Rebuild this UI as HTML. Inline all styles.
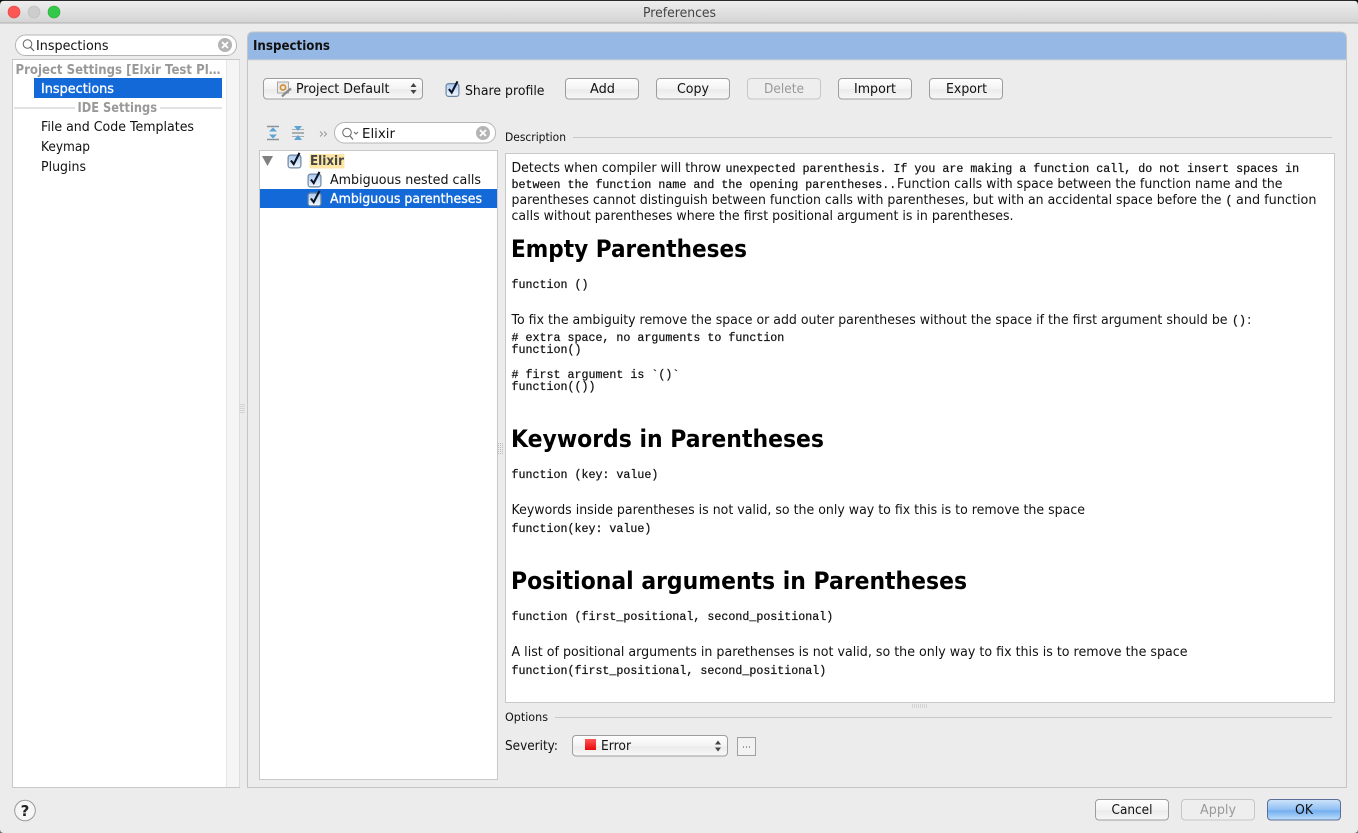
<!DOCTYPE html>
<html>
<head>
<meta charset="utf-8">
<title>Preferences</title>
<style>
html,body{margin:0;padding:0;width:1358px;height:833px;overflow:hidden;background:#ececec}
svg{display:block}
text{font-family:"DejaVu Sans","Liberation Sans",sans-serif;font-size:13px;fill:#111;white-space:pre}
.m{font-family:"Liberation Mono",monospace;font-size:11.67px;stroke:#111;stroke-width:.22}
.h{font-weight:bold;font-size:24px;fill:#000}
.b{font-weight:bold}
.g{fill:#999}
.c{text-anchor:middle}
.w{fill:#fff;stroke:#fff;stroke-width:.3}
</style>
</head>
<body>
<svg width="1358" height="833" viewBox="0 0 1358 833" xmlns="http://www.w3.org/2000/svg">
<defs>
<linearGradient id="tb" x1="0" y1="0" x2="0" y2="1"><stop offset="0" stop-color="#efefef"/><stop offset="1" stop-color="#d3d3d3"/></linearGradient>
<linearGradient id="btn" x1="0" y1="0" x2="0" y2="1"><stop offset="0" stop-color="#ffffff"/><stop offset=".5" stop-color="#f3f3f3"/><stop offset=".55" stop-color="#ebebeb"/><stop offset="1" stop-color="#f8f8f8"/></linearGradient>
<linearGradient id="ok" x1="0" y1="0" x2="0" y2="1"><stop offset="0" stop-color="#cfe3fa"/><stop offset=".5" stop-color="#8fc0f4"/><stop offset=".55" stop-color="#74aef0"/><stop offset="1" stop-color="#bfe0fb"/></linearGradient>
<linearGradient id="cb" x1="0" y1="0" x2="0" y2="1"><stop offset="0" stop-color="#a9c9ee"/><stop offset=".5" stop-color="#cfe2f7"/><stop offset="1" stop-color="#f4f9ff"/></linearGradient>
<linearGradient id="red" x1="0" y1="0" x2="0" y2="1"><stop offset="0" stop-color="#f55"/><stop offset="1" stop-color="#e80808"/></linearGradient>
<g id="check">
<rect x="0.6" y="2.6" width="12.8" height="12.8" rx="2.5" fill="url(#cb)" stroke="#6f86a2" stroke-width="1.2"/>
<path d="M3.4 8 L6.2 11.6 L12 0.4" fill="none" stroke="#0b1526" stroke-width="2.1"/>
</g>
<g id="clear">
<circle cx="0" cy="0" r="7" fill="#b4b4b4"/>
<path d="M-3 -3 L3 3 M3 -3 L-3 3" stroke="#fff" stroke-width="1.8"/>
</g>
<g id="updown">
<path d="M-3 -1.5 L0 -5.5 L3 -1.5 Z M-3 1.5 L0 5.5 L3 1.5 Z" fill="#444"/>
</g>
<g id="wrench">
<rect x="0.5" y="0.5" width="11" height="11" fill="#e8e8e8" stroke="#a8a8a8"/>
<circle cx="6" cy="6" r="2.6" fill="none" stroke="#d98a2b" stroke-width="1.6"/>
<path d="M8 12 L14 7" stroke="#8a8a8a" stroke-width="2.4"/>
<path d="M5 15 L9 11" stroke="#8a8a8a" stroke-width="2.2"/>
</g>
</defs>

<!-- window -->
<rect width="1358" height="833" fill="#ececec"/>
<rect width="1358" height="23" fill="url(#tb)"/>
<rect y="22.5" width="1358" height="1" fill="#aeaeae"/>
<rect width="1358" height="1" fill="#2a2a2a"/>
<path d="M0 0 H5 Q0 1 0 5 Z M1358 0 H1353 Q1358 1 1358 5 Z" fill="#111"/>
<path d="M0 833 V829 Q0 833 4 833 Z M1358 833 V829 Q1358 833 1354 833 Z" fill="#666"/>
<circle cx="14" cy="12" r="6" fill="#fc5753" stroke="#df4744" stroke-width=".6"/>
<circle cx="34" cy="12" r="6" fill="#cdcdcd" stroke="#bcbcbc" stroke-width=".6"/>
<circle cx="54" cy="12" r="6" fill="#34c84a" stroke="#2dac2f" stroke-width=".6"/>
<text x="679.5" y="17" class="c" textLength="73" lengthAdjust="spacingAndGlyphs" style="fill:#444">Preferences</text>

<!-- left search -->
<rect x="15.5" y="35" width="221" height="20.5" rx="10" fill="#fff" stroke="#b5b5b5"/>
<circle cx="27.5" cy="44" r="4.3" fill="none" stroke="#666" stroke-width="1"/>
<path d="M30.5 47.2 L34 51" stroke="#666" stroke-width="1.2"/>
<text x="36" y="50" textLength="72.5" lengthAdjust="spacingAndGlyphs">Inspections</text>
<use href="#clear" x="225" y="45"/>

<!-- left list -->
<rect x="12.5" y="59.5" width="227" height="728" fill="#fff" stroke="#c8c8c8"/>
<rect x="226.5" y="60" width="13" height="727" fill="#f5f5f5"/>
<rect x="226" y="60" width="1" height="727" fill="#e6e6e6"/>
<text x="15.5" y="74" class="b g" textLength="205" lengthAdjust="spacingAndGlyphs">Project Settings [Elxir Test Pl…</text>
<rect x="34" y="78" width="188" height="20" fill="#1469d8"/>
<text x="41" y="93" textLength="73" lengthAdjust="spacingAndGlyphs" class="w">Inspections</text>
<rect x="14" y="107.5" width="61" height="1" fill="#c4c4c4"/>
<rect x="160" y="107.5" width="62" height="1" fill="#c4c4c4"/>
<text x="77.5" y="112" class="b g" textLength="79.5" lengthAdjust="spacingAndGlyphs">IDE Settings</text>
<text x="41" y="131" textLength="153" lengthAdjust="spacingAndGlyphs">File and Code Templates</text>
<text x="41" y="151" textLength="49" lengthAdjust="spacingAndGlyphs">Keymap</text>
<text x="41" y="171" textLength="45" lengthAdjust="spacingAndGlyphs">Plugins</text>

<!-- grip left -->
<path d="M240 404 V414 M242 404 V414 M244 404 V414" stroke="#bbb" stroke-width="1" stroke-dasharray="1 1"/>

<!-- main panel -->
<path d="M247.5 787.5 V38 Q247.5 32 253 32 H1340 Q1346.5 32 1346.5 38 V787.5 Z" fill="#ececec" stroke="#c4c4c4"/>
<path d="M248 59.5 V38 Q248 32.5 253 32.5 H1340 Q1346 32.5 1346 38 V59.5 Z" fill="#95b8e4"/>
<rect x="248" y="59.5" width="1098" height="1" fill="#d8d8d8"/>
<text x="253" y="50" class="b" textLength="77" lengthAdjust="spacingAndGlyphs">Inspections</text>

<!-- toolbar -->
<rect x="263.5" y="78.5" width="159" height="20.5" rx="3.5" fill="url(#btn)" stroke="#9d9d9d"/>
<use href="#wrench" x="277" y="81.5"/>
<text x="296" y="93" textLength="93.5" lengthAdjust="spacingAndGlyphs">Project Default</text>
<use href="#updown" x="413.5" y="88.5"/>
<use href="#check" x="445.5" y="81"/>
<text x="465" y="95" textLength="79.5" lengthAdjust="spacingAndGlyphs">Share profile</text>

<g>
<rect x="565.5" y="78.5" width="73" height="20.5" rx="3.5" fill="url(#btn)" stroke="#9d9d9d"/>
<text x="602.5" y="93" class="c" textLength="25" lengthAdjust="spacingAndGlyphs">Add</text>
<rect x="656.5" y="78.5" width="73" height="20.5" rx="3.5" fill="url(#btn)" stroke="#9d9d9d"/>
<text x="693" y="93" class="c" textLength="32" lengthAdjust="spacingAndGlyphs">Copy</text>
<rect x="747.5" y="78.5" width="73" height="20.5" rx="3.5" fill="#eee" stroke="#c6c6c6"/>
<text x="784" y="93" class="c g" textLength="40" lengthAdjust="spacingAndGlyphs">Delete</text>
<rect x="838.5" y="78.5" width="73" height="20.5" rx="3.5" fill="url(#btn)" stroke="#9d9d9d"/>
<text x="875" y="93" class="c" textLength="42" lengthAdjust="spacingAndGlyphs">Import</text>
<rect x="929.5" y="78.5" width="73" height="20.5" rx="3.5" fill="url(#btn)" stroke="#9d9d9d"/>
<text x="966.5" y="93" class="c" textLength="41" lengthAdjust="spacingAndGlyphs">Export</text>
</g>

<!-- tree toolbar -->
<g>
<path d="M267 126.5 H279 M267 139.5 H279" stroke="#8a9297" stroke-width="1.4"/>
<path d="M269 131.5 L273 127.5 L277 131.5 Z M269 134.5 L273 138.5 L277 134.5 Z" fill="#5da4d6"/>
<path d="M292 133 H304" stroke="#8a9297" stroke-width="1.4"/>
<path d="M292 129.5 H304 M292 136.5 H304" stroke="#a6aeb3" stroke-width="1"/>
<path d="M294 126 L298 131 L302 126 Z M294 140 L298 135 L302 140 Z" fill="#5da4d6"/>
<path d="M320 131.5 L322.5 134 L320 136.5 M324 131.5 L326.5 134 L324 136.5" fill="none" stroke="#999" stroke-width="1"/>
</g>
<rect x="334.5" y="122.5" width="161" height="20.5" rx="10" fill="#fff" stroke="#b5b5b5"/>
<circle cx="347" cy="132.5" r="4.3" fill="none" stroke="#666"/>
<path d="M350 136 L353 139.5" stroke="#666" stroke-width="1.2"/>
<path d="M354 132 L356 134 L358 132" fill="none" stroke="#666"/>
<text x="362" y="138" textLength="33" lengthAdjust="spacingAndGlyphs">Elixir</text>
<use href="#clear" x="483" y="133"/>

<!-- tree -->
<rect x="259.5" y="150.5" width="238" height="629" fill="#fff" stroke="#c8c8c8"/>
<path d="M262 156 H273 L267.5 166 Z" fill="#808080"/>
<use href="#check" x="287.5" y="152.5"/>
<rect x="309.5" y="154" width="35" height="14.5" rx="2" fill="#fbe6a6"/>
<text x="310" y="165" class="b" textLength="34" lengthAdjust="spacingAndGlyphs" style="fill:#444">Elixir</text>
<use href="#check" x="307.5" y="171.5"/>
<text x="330" y="184" textLength="151" lengthAdjust="spacingAndGlyphs">Ambiguous nested calls</text>
<rect x="260" y="189" width="237" height="19" fill="#1469d8"/>
<use href="#check" x="307.5" y="190.5"/>
<text x="330" y="203" textLength="152" lengthAdjust="spacingAndGlyphs" class="w">Ambiguous parentheses</text>

<!-- description -->
<text x="505" y="141" textLength="61" lengthAdjust="spacingAndGlyphs" style="font-size:11.5px">Description</text>
<rect x="573" y="137" width="759" height="1" fill="#c8c8c8"/>
<rect x="505.5" y="153.5" width="829" height="549" fill="#fff" stroke="#c8c8c8"/>

<text x="511.5" y="172" textLength="209.5" lengthAdjust="spacingAndGlyphs">Detects when compiler will throw</text>
<text x="725.5" y="172" class="m">unexpected parenthesis. If you are making a function call, do not insert spaces in</text>
<text x="511.5" y="188" class="m">between the function name and the opening parentheses..</text>
<text x="897" y="188" textLength="385.5" lengthAdjust="spacingAndGlyphs">Function calls with space between the function name and the</text>
<text x="511.5" y="204" textLength="710" lengthAdjust="spacingAndGlyphs">parentheses cannot distinguish between function calls with parentheses, but with an accidental space before the</text>
<text x="1225.5" y="204" class="m">(</text>
<text x="1236" y="204" textLength="80.5" lengthAdjust="spacingAndGlyphs">and function</text>
<text x="511.5" y="220" textLength="502" lengthAdjust="spacingAndGlyphs">calls without parentheses where the first positional argument is in parentheses.</text>

<text x="511" y="257" class="h" textLength="236" lengthAdjust="spacingAndGlyphs">Empty Parentheses</text>
<text x="511.5" y="288" class="m">function ()</text>
<text x="511.5" y="324" textLength="716" lengthAdjust="spacingAndGlyphs">To fix the ambiguity remove the space or add outer parentheses without the space if the first argument should be</text>
<text x="1232" y="324" class="m">()</text>
<text x="1247" y="324">:</text>
<text x="511.5" y="341" class="m"># extra space, no arguments to function</text>
<text x="511.5" y="353" class="m">function()</text>
<text x="511.5" y="378" class="m"># first argument is `()`</text>
<text x="511.5" y="390" class="m">function(())</text>

<text x="511" y="447" class="h" textLength="313" lengthAdjust="spacingAndGlyphs">Keywords in Parentheses</text>
<text x="511.5" y="478" class="m">function (key: value)</text>
<text x="511.5" y="514" textLength="573.5" lengthAdjust="spacingAndGlyphs">Keywords inside parentheses is not valid, so the only way to fix this is to remove the space</text>
<text x="511.5" y="532" class="m">function(key: value)</text>

<text x="511" y="589" class="h" textLength="456" lengthAdjust="spacingAndGlyphs">Positional arguments in Parentheses</text>
<text x="511.5" y="620" class="m">function (first_positional, second_positional)</text>
<text x="511.5" y="656" textLength="676" lengthAdjust="spacingAndGlyphs">A list of positional arguments in parethenses is not valid, so the only way to fix this is to remove the space</text>
<text x="511.5" y="674" class="m">function(first_positional, second_positional)</text>

<!-- grips -->
<path d="M498.5 443 V455 M500.5 443 V455 M502.5 443 V455" stroke="#bbb" stroke-dasharray="1 1"/>
<path d="M912 705 H928 M912 707 H928" stroke="#bbb" stroke-dasharray="1 1"/>

<!-- options -->
<text x="505" y="721" textLength="43" lengthAdjust="spacingAndGlyphs" style="font-size:11.5px">Options</text>
<rect x="555" y="717" width="777" height="1" fill="#c8c8c8"/>
<text x="505" y="750" textLength="53" lengthAdjust="spacingAndGlyphs">Severity:</text>
<rect x="572.5" y="735.5" width="155" height="20.5" rx="3.5" fill="url(#btn)" stroke="#9d9d9d"/>
<rect x="585" y="739" width="11" height="11" fill="url(#red)"/>
<text x="601" y="750" textLength="30" lengthAdjust="spacingAndGlyphs">Error</text>
<use href="#updown" x="718" y="746"/>
<rect x="737.5" y="737.5" width="18" height="18" fill="#f2f2f2" stroke="#a0a0a0"/>
<path d="M743 747 h1 M746 747 h1 M749 747 h1" stroke="#444" stroke-width="1"/>

<!-- footer -->
<circle cx="25" cy="810.5" r="10.3" fill="#f6f6f6" stroke="#9a9a9a"/>
<text x="25" y="816" class="c b" style="font-size:15px;fill:#222">?</text>

<rect x="1095.5" y="799.5" width="73" height="20.5" rx="3.5" fill="url(#btn)" stroke="#9d9d9d"/>
<text x="1132" y="814" class="c" textLength="41" lengthAdjust="spacingAndGlyphs">Cancel</text>
<rect x="1181.5" y="799.5" width="73" height="20.5" rx="3.5" fill="#eee" stroke="#c6c6c6"/>
<text x="1218" y="814" class="c g" textLength="36" lengthAdjust="spacingAndGlyphs">Apply</text>
<rect x="1267.5" y="799.5" width="73" height="20.5" rx="3.5" fill="url(#ok)" stroke="#5d6f96"/>
<text x="1304" y="814" class="c" textLength="18" lengthAdjust="spacingAndGlyphs">OK</text>
</svg>
</body>
</html>
